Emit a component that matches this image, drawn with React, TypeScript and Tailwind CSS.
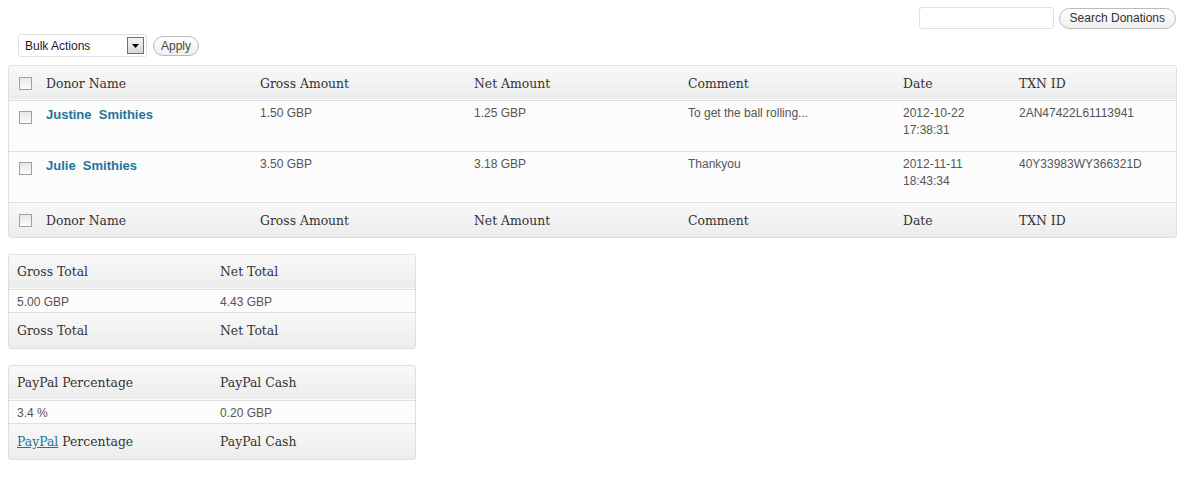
import React from 'react'

const serif = "font-['DejaVu_Serif',Georgia,serif]"
const sans = "font-['Liberation_Sans',Arial,sans-serif]"

function Box() {
  return (
    <span className="inline-block h-[13px] w-[13px] border border-[#a0a0a0] bg-gradient-to-b from-[#e6e6e6] to-[#fdfdfd] align-middle" />
  )
}

type Row = {
  first: string
  last: string
  gross: string
  net: string
  comment: string
  date: string
  time: string
  txn: string
}

const rows: Row[] = [
  {
    first: 'Justine',
    last: 'Smithies',
    gross: '1.50 GBP',
    net: '1.25 GBP',
    comment: 'To get the ball rolling...',
    date: '2012-10-22',
    time: '17:38:31',
    txn: '2AN47422L61113941',
  },
  {
    first: 'Julie',
    last: 'Smithies',
    gross: '3.50 GBP',
    net: '3.18 GBP',
    comment: 'Thankyou',
    date: '2012-11-11',
    time: '18:43:34',
    txn: '40Y33983WY366321D',
  },
]

const cols = ['Donor Name', 'Gross Amount', 'Net Amount', 'Comment', 'Date', 'TXN ID']

function HeadRow({ top }: { top?: boolean }) {
  return (
    <tr
      className={`bg-gradient-to-b from-[#f9f9f9] to-[#ececec] ${serif} text-[12.4px] text-[#333] ${
        top ? 'h-[34px] border-b border-[#dfdfdf]' : 'h-[35px]'
      }`}
    >
      <th className="pl-[10px] pt-[2px] text-left font-normal">
        <Box />
      </th>
      {cols.map((c) => (
        <th key={c} className="px-2 pt-[4px] text-left font-normal">
          {c}
        </th>
      ))}
    </tr>
  )
}

function SmallTable({
  head,
  values,
  linkFirst,
}: {
  head: [string, string]
  values: [string, string]
  linkFirst?: boolean
}) {
  return (
    <div className="mt-[16px] w-[408px] overflow-hidden rounded-[3px] border border-[#dfdfdf]">
      <table className="w-full table-fixed border-collapse">
        <colgroup>
          <col className="w-[203px]" />
          <col />
        </colgroup>
        <thead>
          <tr className={`h-[34px] border-b border-[#dfdfdf] bg-gradient-to-b from-[#f9f9f9] to-[#ececec] ${serif} text-[12.4px] text-[#333]`}>
            <th className="px-2 pt-[2px] text-left font-normal">{head[0]}</th>
            <th className="px-2 pt-[2px] text-left font-normal">{head[1]}</th>
          </tr>
        </thead>
        <tbody>
          <tr className={`h-[23px] border-b border-[#dfdfdf] bg-[#fcfcfc] ${sans} text-[12px] text-[#555]`}>
            <td className="px-2 pt-[2px]">{values[0]}</td>
            <td className="px-2 pt-[2px]">{values[1]}</td>
          </tr>
        </tbody>
        <tfoot>
          <tr className={`h-[36px] bg-gradient-to-b from-[#f9f9f9] to-[#ececec] ${serif} text-[12.4px] text-[#333]`}>
            <th className="px-2 pt-[2px] text-left font-normal">
              {linkFirst ? (
                <>
                  <a className="text-[#21759b] underline">PayPal</a> Percentage
                </>
              ) : (
                head[0]
              )}
            </th>
            <th className="px-2 pt-[2px] text-left font-normal">{head[1]}</th>
          </tr>
        </tfoot>
      </table>
    </div>
  )
}

export default function App() {
  return (
    <div className={`min-h-[481px] bg-white px-2 pt-[7px] ${sans} text-[12px] text-[#333]`}>
      {/* search */}
      <div className="flex items-center justify-end gap-[5px] pr-[7px]">
        <div className="h-[22px] w-[135px] rounded-[3px] border border-[#dfdfdf] bg-white" />
        <button className="h-[21px] rounded-full border border-[#bbb] bg-gradient-to-b from-white to-[#efefef] px-[10px] text-[12px] leading-none text-[#333]">
          Search Donations
        </button>
      </div>

      {/* bulk actions */}
      <div className="mt-[5px] flex items-center gap-[6px] pl-[10px]">
        <div className="flex h-[23px] w-[129px] items-center justify-between rounded-[3px] border border-[#dfdfdf] bg-white pl-[6px] pr-[2px]">
          <span className="text-[12px] text-[#1a1a2a]">Bulk Actions</span>
          <span className="flex h-[17px] w-[17px] items-center justify-center border border-[#707070] bg-gradient-to-b from-[#f4f4f4] to-[#d8d8d8]">
            <svg width="7" height="4" viewBox="0 0 7 4">
              <path d="M0 0h7L3.5 4z" fill="#000" />
            </svg>
          </span>
        </div>
        <button className="h-[20px] rounded-full border border-[#bbb] bg-gradient-to-b from-white to-[#efefef] px-[7px] text-[12px] leading-none text-[#464646]">
          Apply
        </button>
      </div>

      {/* main list */}
      <div className="mt-[8px] w-[1169px] overflow-hidden rounded-[3px] border border-[#dfdfdf]">
        <table className="w-full table-fixed border-collapse">
          <colgroup>
            <col className="w-[29px]" />
            <col className="w-[214px]" />
            <col className="w-[214px]" />
            <col className="w-[214px]" />
            <col className="w-[215px]" />
            <col className="w-[116px]" />
            <col />
          </colgroup>
          <thead>
            <HeadRow top />
          </thead>
          <tbody>
            {rows.map((r) => (
              <tr key={r.txn} className="h-[51px] border-b border-[#dfdfdf] bg-[#fcfcfc] align-top text-[12px] text-[#555]">
                <td className="pl-[10px] pt-[7px]">
                  <Box />
                </td>
                <td className="px-2 pt-[5px] leading-[17px]">
                  <a className="text-[13px] font-bold text-[#21759b]">
                    {r.first}
                    {'\u00a0 '}
                    {r.last}
                  </a>
                </td>
                <td className="px-2 pt-[4px] leading-[17px]">{r.gross}</td>
                <td className="px-2 pt-[4px] leading-[17px]">{r.net}</td>
                <td className="px-2 pt-[4px] leading-[17px]">{r.comment}</td>
                <td className="px-2 pt-[4px] leading-[17px]">
                  {r.date}
                  <br />
                  {r.time}
                </td>
                <td className="px-2 pt-[4px] leading-[17px]">{r.txn}</td>
              </tr>
            ))}
          </tbody>
          <tfoot>
            <HeadRow />
          </tfoot>
        </table>
      </div>

      <SmallTable head={['Gross Total', 'Net Total']} values={['5.00 GBP', '4.43 GBP']} />
      <SmallTable head={['PayPal Percentage', 'PayPal Cash']} values={['3.4 %', '0.20 GBP']} linkFirst />
    </div>
  )
}
